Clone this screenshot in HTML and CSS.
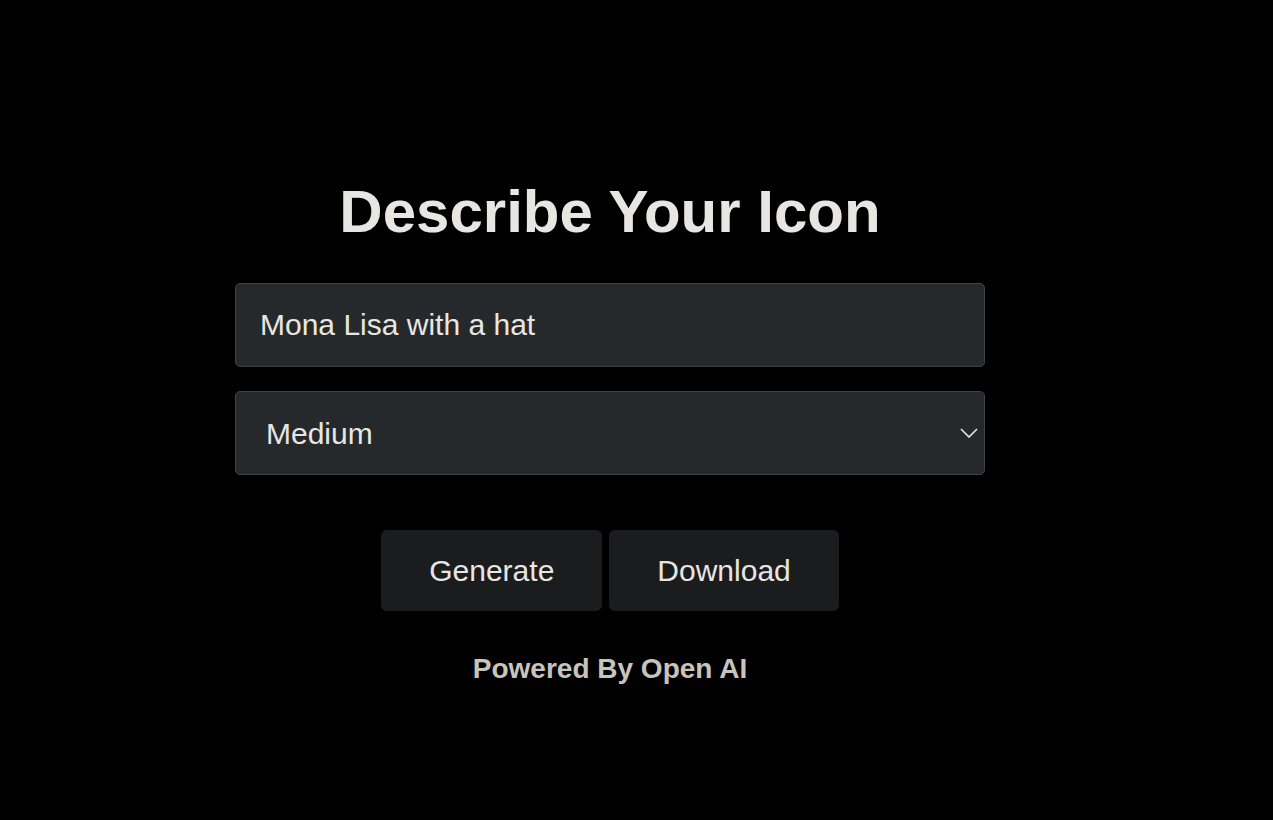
FILE: index.html
```html
<!DOCTYPE html>
<html lang="en">
<head>
<meta charset="utf-8">
<title>Describe Your Icon</title>
<link rel="stylesheet" href="styles.css">
</head>
<body>
<main class="page">
  <h1 class="title">Describe Your Icon</h1>
  <div class="form">
    <input class="field" type="text" value="Mona Lisa with a hat">
    <div class="select-wrap">
      <select class="field select">
        <option>Medium</option>
        <option>Small</option>
        <option>Large</option>
      </select>
      <svg class="chevron" width="18" height="10" viewBox="0 0 18 10" aria-hidden="true"><path d="M1 1 L9 9 L17 1" fill="none" stroke="#e8e6e3" stroke-width="1.6"/></svg>
    </div>
  </div>
  <div class="actions">
    <button class="btn btn-generate">Generate</button>
    <button class="btn btn-download">Download</button>
  </div>
  <p class="powered">Powered By Open AI</p>
</main>
</body>
</html>
```

FILE: styles.css
```css
html, body {
  margin: 0;
  padding: 0;
  background: #000;
  height: 100%;
}
body {
  font-family: "Liberation Sans", Arial, Helvetica, sans-serif;
  color: #e8e6e3;
}
.page {
  width: 1220px;
  display: flex;
  flex-direction: column;
  align-items: center;
  padding-top: 176px;
}
.title {
  margin: 0;
  font-size: 60px;
  line-height: 72px;
  font-weight: bold;
  color: #e8e6e3;
}
.form {
  width: 750px;
  display: flex;
  flex-direction: column;
  gap: 24px;
  margin-top: 35px;
}
.field {
  box-sizing: border-box;
  width: 100%;
  height: 84px;
  background: #26292b;
  border: 1px solid #3f4346;
  border-radius: 5px;
  color: #e8e6e3;
  font-family: "Liberation Sans", Arial, Helvetica, sans-serif;
  font-size: 30px;
  padding: 0 24px;
  outline: none;
}
.select-wrap {
  position: relative;
}
.select {
  appearance: none;
  -webkit-appearance: none;
  padding-left: 30px;
}
.chevron {
  position: absolute;
  right: 7px;
  top: 37px;
  pointer-events: none;
}
.actions {
  display: flex;
  gap: 7px;
  margin-top: 55px;
}
.btn {
  height: 81px;
  padding: 0 48px;
  background: #1b1c1e;
  border: none;
  border-radius: 6px;
  color: #e8e6e3;
  font-family: "Liberation Sans", Arial, Helvetica, sans-serif;
  font-size: 30px;
}
.powered {
  margin: 42px 0 0;
  font-size: 28px;
  font-weight: bold;
  color: #c8c4bd;
}
```
